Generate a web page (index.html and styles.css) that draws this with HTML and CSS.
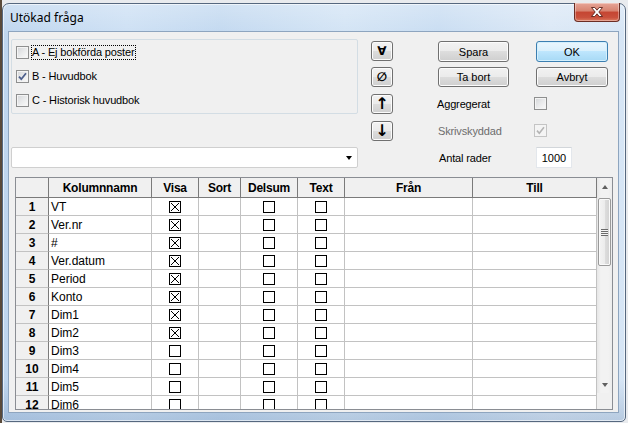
FILE: index.html
```html
<!DOCTYPE html>
<html>
<head>
<meta charset="utf-8">
<title>Utökad fråga</title>
<link rel="stylesheet" href="styles.css">
</head>
<body>
<div class="window">
  <div class="titlebar">
    <span class="title">Utökad fråga</span>
    <div class="close">
      <svg width="12" height="10" viewBox="0 0 12 10"><polygon points="0.5,0.5 3.8,0.5 6,3.2 8.2,0.5 11.5,0.5 7.8,5 11.5,9.5 8.2,9.5 6,6.8 3.8,9.5 0.5,9.5 4.2,5" fill="#fff" stroke="#5b2019" stroke-width="0.9" stroke-linejoin="round"/></svg>
    </div>
  </div>
  <div class="client">
    <div class="top">
      <div class="left">
        <div class="sources">
          <div class="opt"><span class="cb"></span><span class="otext focus">A - Ej bokförda poster</span></div>
          <div class="opt"><span class="cb"><svg class="chk" width="11" height="11" viewBox="0 0 11 11"><path d="M2 5.6 L4.3 8.2 L9 2.2" fill="none" stroke="#4d5f8c" stroke-width="1.8"/></svg></span><span class="otext">B - Huvudbok</span></div>
          <div class="opt"><span class="cb"></span><span class="otext">C - Historisk huvudbok</span></div>
        </div>
        <div class="combo"><span class="combo-arrow"></span></div>
      </div>
      <div class="arrows">
        <div class="sbtn s1">∀</div>
        <div class="sbtn s2">∅</div>
        <div class="sbtn s3">↑</div>
        <div class="sbtn s4">↓</div>
      </div>
      <div class="right">
        <div class="btnrow r1"><div class="btn spara">Spara</div><div class="btn ok">OK</div></div>
        <div class="btnrow r2"><div class="btn spara">Ta bort</div><div class="btn avbryt">Avbryt</div></div>
        <div class="optrow o1"><span class="lbl">Aggregerat</span><span class="cb"></span></div>
        <div class="optrow o2"><span class="lbl dis">Skrivskyddad</span><span class="cb cb-dis"><svg class="chk" width="11" height="11" viewBox="0 0 11 11"><path d="M2 5.6 L4.3 8.2 L9 2.2" fill="none" stroke="#b4b4b4" stroke-width="1.6"/></svg></span></div>
        <div class="optrow o3"><span class="lbl lbl2">Antal rader</span><span class="num">1000</span></div>
      </div>
    </div>
    <div class="grid">
      <div class="table">
        <div class="h corner"></div><div class="h">Kolumnnamn</div><div class="h">Visa</div><div class="h">Sort</div><div class="h">Delsum</div><div class="h">Text</div><div class="h">Från</div><div class="h">Till</div>

        <div class="rn">1</div><div class="name">VT</div><div class="c"><svg class="xb" width="12" height="12" viewBox="0 0 12 12"><rect x="0.5" y="0.5" width="11" height="11" fill="#fff" stroke="#000"/><path d="M2 2L10 10M10 2L2 10" stroke="#000"/></svg></div><div class="c"></div><div class="c"><span class="box"></span></div><div class="c"><span class="box"></span></div><div class="c"></div><div class="c"></div>
        <div class="rn">2</div><div class="name">Ver.nr</div><div class="c"><svg class="xb" width="12" height="12" viewBox="0 0 12 12"><rect x="0.5" y="0.5" width="11" height="11" fill="#fff" stroke="#000"/><path d="M2 2L10 10M10 2L2 10" stroke="#000"/></svg></div><div class="c"></div><div class="c"><span class="box"></span></div><div class="c"><span class="box"></span></div><div class="c"></div><div class="c"></div>
        <div class="rn">3</div><div class="name">#</div><div class="c"><svg class="xb" width="12" height="12" viewBox="0 0 12 12"><rect x="0.5" y="0.5" width="11" height="11" fill="#fff" stroke="#000"/><path d="M2 2L10 10M10 2L2 10" stroke="#000"/></svg></div><div class="c"></div><div class="c"><span class="box"></span></div><div class="c"><span class="box"></span></div><div class="c"></div><div class="c"></div>
        <div class="rn">4</div><div class="name">Ver.datum</div><div class="c"><svg class="xb" width="12" height="12" viewBox="0 0 12 12"><rect x="0.5" y="0.5" width="11" height="11" fill="#fff" stroke="#000"/><path d="M2 2L10 10M10 2L2 10" stroke="#000"/></svg></div><div class="c"></div><div class="c"><span class="box"></span></div><div class="c"><span class="box"></span></div><div class="c"></div><div class="c"></div>
        <div class="rn">5</div><div class="name">Period</div><div class="c"><svg class="xb" width="12" height="12" viewBox="0 0 12 12"><rect x="0.5" y="0.5" width="11" height="11" fill="#fff" stroke="#000"/><path d="M2 2L10 10M10 2L2 10" stroke="#000"/></svg></div><div class="c"></div><div class="c"><span class="box"></span></div><div class="c"><span class="box"></span></div><div class="c"></div><div class="c"></div>
        <div class="rn">6</div><div class="name">Konto</div><div class="c"><svg class="xb" width="12" height="12" viewBox="0 0 12 12"><rect x="0.5" y="0.5" width="11" height="11" fill="#fff" stroke="#000"/><path d="M2 2L10 10M10 2L2 10" stroke="#000"/></svg></div><div class="c"></div><div class="c"><span class="box"></span></div><div class="c"><span class="box"></span></div><div class="c"></div><div class="c"></div>
        <div class="rn">7</div><div class="name">Dim1</div><div class="c"><svg class="xb" width="12" height="12" viewBox="0 0 12 12"><rect x="0.5" y="0.5" width="11" height="11" fill="#fff" stroke="#000"/><path d="M2 2L10 10M10 2L2 10" stroke="#000"/></svg></div><div class="c"></div><div class="c"><span class="box"></span></div><div class="c"><span class="box"></span></div><div class="c"></div><div class="c"></div>
        <div class="rn">8</div><div class="name">Dim2</div><div class="c"><svg class="xb" width="12" height="12" viewBox="0 0 12 12"><rect x="0.5" y="0.5" width="11" height="11" fill="#fff" stroke="#000"/><path d="M2 2L10 10M10 2L2 10" stroke="#000"/></svg></div><div class="c"></div><div class="c"><span class="box"></span></div><div class="c"><span class="box"></span></div><div class="c"></div><div class="c"></div>
        <div class="rn">9</div><div class="name">Dim3</div><div class="c"><span class="box"></span></div><div class="c"></div><div class="c"><span class="box"></span></div><div class="c"><span class="box"></span></div><div class="c"></div><div class="c"></div>
        <div class="rn">10</div><div class="name">Dim4</div><div class="c"><span class="box"></span></div><div class="c"></div><div class="c"><span class="box"></span></div><div class="c"><span class="box"></span></div><div class="c"></div><div class="c"></div>
        <div class="rn">11</div><div class="name">Dim5</div><div class="c"><span class="box"></span></div><div class="c"></div><div class="c"><span class="box"></span></div><div class="c"><span class="box"></span></div><div class="c"></div><div class="c"></div>
        <div class="rn">12</div><div class="name">Dim6</div><div class="c"><span class="box"></span></div><div class="c"></div><div class="c"><span class="box"></span></div><div class="c"><span class="box"></span></div><div class="c"></div><div class="c"></div>
      </div>
      <div class="vscroll">
        <div class="track">
          <div class="sarrow"><span class="tri-up"></span></div>
          <div class="thumb"><span class="grip"></span></div>
          <div class="trackfill"></div>
          <div class="sarrow"><span class="tri-down"></span></div>
        </div>
        <div class="sbcorner"></div>
      </div>
    </div>
  </div>
</div>
</body>
</html>
```

FILE: styles.css
```css
html, body {
  margin: 0;
  padding: 0;
}
body {
  width: 628px;
  height: 423px;
  overflow: hidden;
  background: linear-gradient(90deg, #5a4a3a 0, #5a4a3a 2px, #e9ebee 2px);
  font-family: "Liberation Sans", Arial, sans-serif;
  color: #000;
}

.window {
  margin: 3px 0 0 2px;
  width: 624px;
  height: 419px;
  box-sizing: border-box;
  border: 1px solid #56687f;
  border-radius: 7px 7px 5px 5px;
  padding: 0 6px 8px 5px;
  display: flex;
  flex-direction: column;
  background:
    linear-gradient(180deg, rgba(255,255,255,0.25) 0, rgba(255,255,255,0) 30px, rgba(0,0,0,0) 90%, rgba(40,80,130,0.18) 100%),
    linear-gradient(90deg, #bfd6ef 0%, #cde0f4 20%, #c3d9f0 35%, #d3e4f5 55%, #c9ddf2 70%, #dbe8f6 88%, #d6e5f5 100%);
  box-shadow: inset 0 0 0 1px rgba(255,255,255,0.6);
}

.titlebar {
  height: 27px;
  display: flex;
  align-items: flex-start;
}
.title {
  font-family: "Noto Sans", "Open Sans", sans-serif;
  font-size: 12px;
  line-height: 16px;
  margin: 6px 0 0 2px;
  color: #000;
}
.close {
  margin: -1px -1px 0 auto;
  width: 46px;
  height: 19px;
  box-sizing: border-box;
  border: 1px solid #6b2d24;
  border-top: none;
  border-radius: 0 0 4px 4px;
  background: linear-gradient(180deg, #e7a597 0%, #d7826f 45%, #c54532 50%, #c9503c 80%, #dc7a5f 100%);
  box-shadow: inset 0 0 0 1px rgba(255,255,255,0.35);
  display: flex;
  align-items: center;
  justify-content: center;
}

.client {
  width: 611px;
  height: 382px;
  box-sizing: border-box;
  border: 1px solid #8ea5bf;
  background: #f0f0f0;
  padding-top: 7px;
  display: flex;
  flex-direction: column;
}

.top {
  display: flex;
  height: 129px;
}
.left {
  margin-left: 2px;
  width: 347px;
  display: flex;
  flex-direction: column;
}
.sources {
  height: 75px;
  box-sizing: border-box;
  border: 1px solid #d3dde4;
  border-radius: 2px;
  padding-left: 4px;
}
.opt {
  height: 24px;
  display: flex;
  align-items: center;
  font-size: 11px;
}
.otext {
  border: 1px dotted transparent;
  line-height: 13px;
  margin-left: 2px;
  letter-spacing: -0.15px;
}
.otext.focus {
  border-color: #000;
  padding-right: 1px;
}

.cb {
  width: 13px;
  height: 13px;
  box-sizing: border-box;
  border: 1px solid #8e8f8f;
  background: linear-gradient(135deg, #d3d5d8 0%, #e9eaeb 50%, #fbfbfb 100%);
  box-shadow: inset 0 0 0 1px #f4f4f4;
  display: flex;
  align-items: center;
  justify-content: center;
  flex: none;
}
.cb-dis {
  border-color: #c4c4c4;
  background: #f4f4f4;
}
.chk {
  display: block;
}

.combo {
  margin-top: 33px;
  height: 21px;
  box-sizing: border-box;
  border: 1px solid #cfcfcf;
  border-radius: 2px;
  background: #fff;
  display: flex;
  align-items: center;
  justify-content: flex-end;
}
.combo-arrow {
  width: 0;
  height: 0;
  border-left: 3.5px solid transparent;
  border-right: 3.5px solid transparent;
  border-top: 4px solid #000;
  margin-right: 5px;
}

.arrows {
  margin-left: 13px;
  width: 22px;
  display: flex;
  flex-direction: column;
}
.sbtn {
  height: 20px;
  box-sizing: border-box;
  border: 1px solid #707070;
  border-radius: 3px;
  background: linear-gradient(180deg, #f2f2f2 0%, #ebebeb 50%, #dddddd 50%, #cfcfcf 100%);
  box-shadow: inset 0 0 0 1px #fcfcfc;
  display: flex;
  align-items: center;
  justify-content: center;
  font-family: "DejaVu Sans", sans-serif;
  font-weight: bold;
  font-size: 12px;
  line-height: 1;
}
.s1 { margin-top: 2px; }
.s2 { margin-top: 6px; }
.s3 { margin-top: 7px; font-size: 16px; }
.s4 { margin-top: 7px; font-size: 16px; }

.right {
  margin-left: 44px;
  width: 171px;
  display: flex;
  flex-direction: column;
}
.btnrow {
  display: flex;
}
.btnrow.r1 { margin-top: 2px; height: 21px; }
.btnrow.r2 { margin-top: 5px; height: 20px; }
.btn {
  box-sizing: border-box;
  height: 100%;
  border: 1px solid #707070;
  border-radius: 3px;
  background: linear-gradient(180deg, #f2f2f2 0%, #ebebeb 50%, #dddddd 50%, #cfcfcf 100%);
  box-shadow: inset 0 0 0 1px #fcfcfc;
  display: flex;
  align-items: center;
  justify-content: center;
  font-size: 11px;
}
.btn.spara {
  margin-left: 1px;
  width: 71px;
}
.btn.ok, .btn.avbryt {
  margin-left: 27px;
  width: 72px;
}
.btn.ok {
  border-color: #3c7fb1;
  background: linear-gradient(180deg, #eaf6fd 0%, #d9f0fc 50%, #bee6fd 50%, #a7d9f5 100%);
  box-shadow: inset 0 0 0 1px #d4f0fd;
}

.optrow {
  display: flex;
  align-items: center;
  font-size: 11px;
}
.optrow.o1 { margin-top: 10px; height: 13px; }
.optrow.o2 { margin-top: 14px; height: 13px; }
.optrow.o3 { margin-top: 10px; height: 21px; }
.lbl {
  width: 97px;
  letter-spacing: -0.15px;
}
.lbl.dis {
  color: #6d6d6d;
  margin-left: 1px;
  width: 96px;
}
.lbl2 {
  margin-left: 2px;
  width: 97px;
}
.num {
  width: 36px;
  height: 21px;
  box-sizing: border-box;
  border: 1px solid #e3e7ec;
  border-top-color: #d2d6da;
  background: #fff;
  display: flex;
  align-items: center;
  justify-content: center;
  font-size: 11px;
}

.grid {
  margin: 9px 0 0 6px;
  width: 598px;
  height: 233px;
  box-sizing: border-box;
  border: 1px solid #8a8d93;
  background: #fff;
  display: flex;
}
.table {
  width: 581px;
  height: 231px;
  overflow: hidden;
  display: grid;
  grid-template-columns: 33px 103px 47px 42px 57px 47px 128px 124px;
  grid-template-rows: 20px;
  grid-auto-rows: 18px;
  align-content: start;
}
.table > div {
  box-sizing: border-box;
  border-right: 1px solid #c2c2c2;
  border-bottom: 1px solid #c2c2c2;
  display: flex;
  align-items: center;
  font-size: 12px;
  overflow: hidden;
}
.table > .h {
  background: #f0f0f0;
  font-weight: bold;
  justify-content: center;
  border-right-color: #7a7a7a;
  border-bottom-color: #7a7a7a;
  letter-spacing: -0.2px;
}
.table > .rn {
  background: #f0f0f0;
  font-weight: bold;
  justify-content: center;
  border-right-color: #7a7a7a;
}
.table > .name {
  padding-left: 2px;
}
.table > .c {
  justify-content: center;
}
.box {
  width: 12px;
  height: 12px;
  box-sizing: border-box;
  border: 1px solid #000;
  background: #fff;
}
.xb {
  display: block;
}

.vscroll {
  width: 15px;
  display: flex;
  flex-direction: column;
}
.track {
  height: 215px;
  display: flex;
  flex-direction: column;
  background: linear-gradient(90deg, #e6e6e6 0%, #f2f2f2 25%, #f2f2f2 75%, #ececec 100%);
}
.sarrow {
  height: 17px;
  display: flex;
  align-items: center;
  justify-content: center;
}
.sarrow:last-child {
  height: 16px;
}
.tri-up {
  width: 0;
  height: 0;
  border-left: 3.5px solid transparent;
  border-right: 3.5px solid transparent;
  border-bottom: 4px solid #606060;
}
.tri-down {
  width: 0;
  height: 0;
  border-left: 3.5px solid transparent;
  border-right: 3.5px solid transparent;
  border-top: 4px solid #606060;
}
.thumb {
  margin: 3px 1px 0 1px;
  height: 68px;
  box-sizing: border-box;
  border: 1px solid #9a9a9a;
  border-radius: 2px;
  background: linear-gradient(90deg, #f4f4f4 0%, #ececec 50%, #dedede 50%, #d2d2d2 100%);
  box-shadow: inset 0 0 0 1px #fafafa;
  display: flex;
  align-items: center;
  justify-content: center;
}
.grip {
  width: 7px;
  height: 7px;
  background: repeating-linear-gradient(180deg, #6a6a6a 0, #6a6a6a 1px, #f3f3f3 1px, #f3f3f3 2px);
}
.trackfill {
  flex: 1;
}
.sbcorner {
  flex: 1;
  background: #f0f0f0;
}
```
